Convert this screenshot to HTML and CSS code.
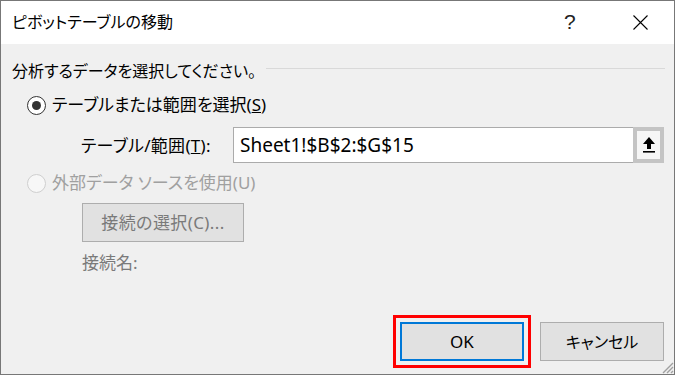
FILE: index.html
```html
<!DOCTYPE html>
<html lang="ja">
<head>
<meta charset="utf-8">
<link rel="stylesheet" href="styles.css">
</head>
<body>
<div class="window">
  <div class="titlebar">
    <span class="title">ピボットテーブルの移動</span>
    <span class="help">?</span>
    <span class="close"><svg width="15" height="15" viewBox="0 0 15 15"><path d="M0.5 0.5 L14.5 14.5 M14.5 0.5 L0.5 14.5" stroke="#000" stroke-width="1.1" fill="none"/></svg></span>
  </div>
  <div class="body">
    <div class="section-head">
      <span>分析するデータを選択してください。</span>
      <div class="rule"></div>
    </div>
    <div class="radio-row">
      <span class="radio checked"></span>
      <span>テーブルまたは範囲を選択(<u>S</u>)</span>
    </div>
    <div class="range-row">
      <span class="range-label">テーブル/範囲(<u>T</u>):</span>
      <div class="field"><span class="field-text">Sheet1!$B$2:$G$15</span></div>
      <span class="pick"><svg width="14" height="18" viewBox="0 0 14 18"><path d="M7 1 L13 8 L9 8 L9 13 L5 13 L5 8 L1 8 Z" fill="#000"/><rect x="1" y="15" width="12" height="1.6" fill="#000"/></svg></span>
    </div>
    <div class="radio-row disabled">
      <span class="radio"></span>
      <span>外部データ ソースを使用(U)</span>
    </div>
    <div class="conn">
      <span class="btn conn-btn">接続の選択(C)...</span>
      <span class="conn-name">接続名:</span>
    </div>
    <div class="footer">
      <span class="btn ok">OK</span>
      <span class="btn cancel">キャンセル</span>
    </div>
    <svg class="grip" width="14" height="14" viewBox="0 0 14 14"><path d="M13 3 L3 13 M13 7 L7 13 M13 11 L11 13" stroke="#a0a0a0" stroke-width="1.4"/></svg>
  </div>
</div>
</body>
</html>
```
FILE: styles.css
```css
html, body {
  margin: 0;
  padding: 0;
  background: #f0f0f0;
}
.window {
  position: relative;
  width: 675px;
  height: 375px;
  box-sizing: border-box;
  border: 1px solid #777;
  background: #f0f0f0;
  font-family: "Noto Sans", "Noto Sans CJK JP", sans-serif;
  font-feature-settings: "palt";
  font-size: 16px;
  color: #000;
  display: flex;
  flex-direction: column;
}
.titlebar {
  height: 43px;
  background: #fff;
  display: flex;
  align-items: center;
  padding-left: 11px;
}
.title {
  flex: 1;
  line-height: 20px;
  margin-top: -1px;
}
.help {
  font-family: "Liberation Sans", sans-serif;
  font-size: 21px;
  color: #222;
  width: 69px;
  margin-top: -2px;
}
.close {
  width: 41px;
  height: 15px;
  display: flex;
  margin-top: -1px;
}
.body {
  flex: 1;
  display: flex;
  flex-direction: column;
}
.section-head {
  display: flex;
  align-items: flex-start;
  margin-top: 17px;
  padding-left: 11px;
  padding-right: 9px;
  line-height: 20px;
  height: 20px;
}
.rule {
  flex: 1;
  height: 1px;
  background: #d9d9d9;
  margin-top: 7px;
  margin-left: 10px;
}
.radio-row {
  display: flex;
  align-items: center;
  height: 20px;
  line-height: 20px;
  font-size: 17px;
  padding-left: 26px;
  margin-top: 14px;
}
.radio {
  width: 19px;
  height: 19px;
  box-sizing: border-box;
  border: 1px solid #333;
  border-radius: 50%;
  background: #fff;
  margin-right: 6px;
  display: flex;
  align-items: center;
  justify-content: center;
}
.radio.checked::after {
  content: "";
  width: 9px;
  height: 9px;
  border-radius: 50%;
  background: #333;
}
.radio-row.disabled {
  color: #a0a0a0;
  margin-top: 10px;
}
.radio-row.disabled .radio {
  border-color: #cfcfcf;
  background: #f7f7f7;
}
.range-row {
  display: flex;
  align-items: center;
  margin-top: 12px;
  padding-left: 80px;
  padding-right: 10px;
  height: 36px;
}
.range-label {
  width: 152px;
  font-size: 17px;
  letter-spacing: 0.3px;
  line-height: 20px;
  margin-top: 2px;
}
.field {
  flex: 1;
  height: 36px;
  box-sizing: border-box;
  border: 1px solid #ababab;
  border-right: none;
  background: #fff;
  display: flex;
  align-items: center;
  padding-left: 6px;
}
.field-text {
  font-family: "Noto Sans", sans-serif;
  font-size: 19px;
  line-height: 24px;
  color: #000;
}
.pick {
  width: 31px;
  height: 36px;
  box-sizing: border-box;
  border: 4px solid #c4c4c4;
  background: #f6f6f6;
  display: flex;
  align-items: center;
  justify-content: center;
}
.conn {
  display: flex;
  flex-direction: column;
  align-items: flex-start;
  padding-left: 81px;
  margin-top: 10px;
}
.btn {
  box-sizing: border-box;
  height: 39px;
  border: 1px solid #adadad;
  background: #e1e1e1;
  display: flex;
  align-items: center;
  justify-content: center;
  width: 124px;
  line-height: 20px;
  font-size: 17px;
}
.conn-btn {
  width: 162px;
  color: #7a7a7a;
  letter-spacing: 0.4px;
}
.conn-name {
  color: #7a7a7a;
  font-size: 17px;
  line-height: 20px;
  margin-top: 11px;
}
.footer {
  margin-top: auto;
  margin-bottom: 13px;
  display: flex;
  justify-content: flex-end;
  gap: 16px;
  padding-right: 10px;
}
.btn.ok {
  border: 2px solid #0078d7;
  outline: 3px solid #f00;
  outline-offset: 4px;
}
.btn.cancel {
  font-size: 16px;
}
.grip {
  position: absolute;
  right: 0;
  bottom: 0;
}
```
